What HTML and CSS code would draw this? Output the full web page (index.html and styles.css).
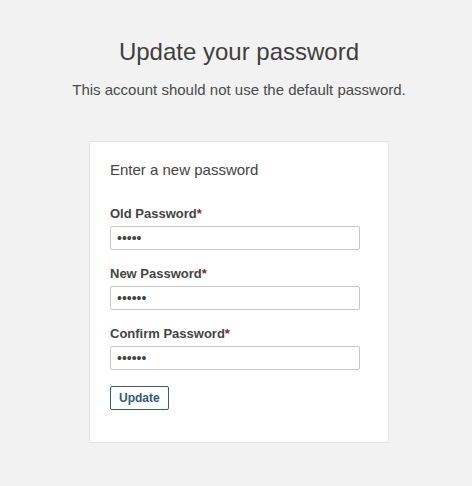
FILE: index.html
```html
<!DOCTYPE html>
<html>
<head>
<meta charset="utf-8">
<link rel="stylesheet" href="styles.css">
</head>
<body>
<main class="page">
  <h1 class="title">Update your password</h1>
  <p class="subtitle">This account should not use the default password.</p>
  <form class="card">
    <h2 class="card-title">Enter a new password</h2>
    <div class="field">
      <label class="label">Old Password<span class="req">*</span></label>
      <input class="input" type="password" value="12345">
    </div>
    <div class="field">
      <label class="label">New Password<span class="req">*</span></label>
      <input class="input" type="password" value="123456">
    </div>
    <div class="field">
      <label class="label">Confirm Password<span class="req">*</span></label>
      <input class="input" type="password" value="123456">
    </div>
    <button class="btn" type="button">Update</button>
  </form>
</main>
</body>
</html>
```
FILE: styles.css
```css
html, body {
  margin: 0;
  padding: 0;
  background: #f2f2f2;
  font-family: "Liberation Sans", Arial, sans-serif;
  color: #444;
}
.page {
  display: flex;
  flex-direction: column;
  align-items: center;
  padding-top: 38px;
  padding-left: 6px;
}
.title {
  margin: 0;
  font-size: 24px;
  font-weight: normal;
  line-height: 28px;
  color: #3f3f3f;
}
.subtitle {
  margin: 15px 0 0;
  font-size: 15px;
  line-height: 18px;
  color: #4a4a4a;
}
.card {
  margin-top: 42px;
  width: 258px;
  padding: 19px 20px 32px 20px;
  background: #fff;
  border: 1px solid #e3e3e3;
  display: flex;
  flex-direction: column;
}
.card-title {
  margin: 0 0 27px;
  font-size: 15px;
  font-weight: normal;
  line-height: 18px;
  color: #444;
}
.field {
  display: flex;
  flex-direction: column;
  margin-bottom: 16px;
}
.label {
  font-size: 13px;
  font-weight: bold;
  line-height: 16px;
  color: #444;
  margin-bottom: 4px;
}
.req {
  color: #8b1c1c;
}
.input {
  box-sizing: border-box;
  width: 250px;
  height: 24px;
  margin: 0;
  padding: 0 6px;
  border: 1px solid #c8c8c8;
  border-radius: 2px;
  font-family: "Liberation Sans", Arial, sans-serif;
  font-size: 14px;
  color: #444;
  background: #fff;
}
.btn {
  align-self: flex-start;
  margin-top: 0;
  box-sizing: border-box;
  height: 24px;
  padding: 0 8px;
  background: #fff;
  border: 1px solid #2f5f7c;
  border-radius: 2px;
  font-family: "Liberation Sans", Arial, sans-serif;
  font-size: 12px;
  font-weight: bold;
  color: #2f5b7b;
}
```
